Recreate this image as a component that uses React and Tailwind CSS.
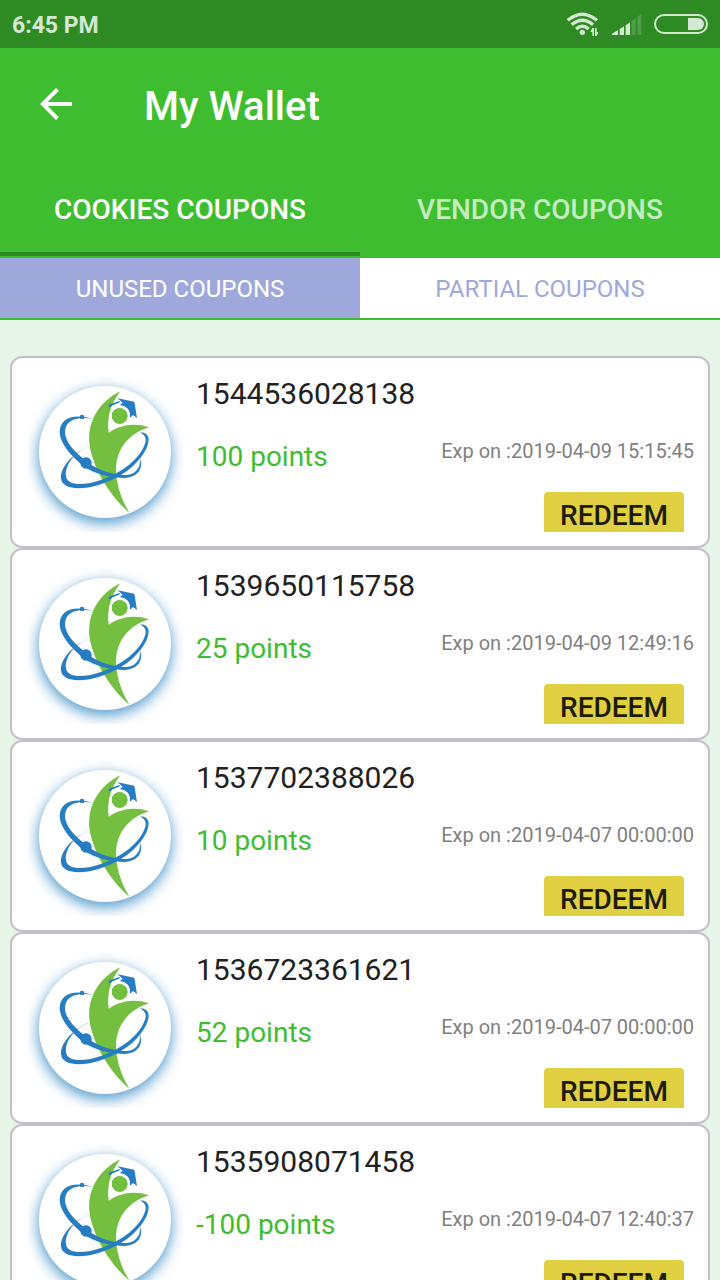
import React from 'react';

const coupons = [
  { id: '1544536028138', points: '100 points', expires: '2019-04-09 15:15:45' },
  { id: '1539650115758', points: '25 points', expires: '2019-04-09 12:49:16' },
  { id: '1537702388026', points: '10 points', expires: '2019-04-07 00:00:00' },
  { id: '1536723361621', points: '52 points', expires: '2019-04-07 00:00:00' },
  { id: '1535908071458', points: '-100 points', expires: '2019-04-07 12:40:37' },
];

function StatusBar() {
  return (
    <div className="flex h-12 shrink-0 items-center justify-between bg-[#2e8b24] px-3 text-[#d5e8d3]">
      <span className="pt-1 text-[23px] font-bold">6:45 PM</span>
      <div className="flex items-center gap-3">
        <svg className="h-6 w-8" viewBox="0 0 96 72" fill="none" aria-hidden="true">
          <g stroke="currentColor" strokeWidth="10">
            <path d="M5 25 Q49 -12 93 25" />
            <path d="M17 38 Q49 11 81 38" />
            <path d="M30 51 Q49 35 68 51" />
          </g>
          <circle cx="49" cy="61" r="8" fill="currentColor" />
          <path d="M79 48h5v24h-5V60h-6zM87 48h5v12h6l-6 12h-5z" fill="currentColor" />
        </svg>
        <svg className="h-6 w-8" viewBox="0 0 96 72" fill="currentColor" aria-hidden="true">
          <path d="M6 69 V65 L24 54 V69 Z M29 51 L42 43 V69 H29 Z M47 40 L60 31 V69 H47 Z" />
          <path d="M65 27 L77 18 V69 H65 Z M82 15 L94 6 V69 H82 Z" opacity=".2" />
        </svg>
        <svg className="h-5 w-[54px]" viewBox="0 0 54 20" aria-hidden="true">
          <rect x="1" y="1" width="52" height="18" rx="9" fill="none" stroke="currentColor" strokeWidth="2" />
          <path d="M34 4H44A6 6 0 0 1 44 16H34Z" fill="currentColor" />
        </svg>
      </div>
    </div>
  );
}

function Logo() {
  return (
    <svg className="mt-[18px] ml-4 size-[156px] shrink-0" viewBox="24 18 468 468" role="img" aria-label="Coupon">
      <defs>
        <filter id="glow" x="-40%" y="-40%" width="180%" height="180%">
          <feGaussianBlur stdDeviation="20" />
        </filter>
      </defs>
      <circle cx="254" cy="260" r="201" fill="#5c9fd0" filter="url(#glow)" />
      <circle cx="255" cy="246" r="198" fill="#fff" />
      <path
        d="M301 64 C222 103 191 181 216 257 C232 315 278 386 328 428 C300 383 284 326 289 282 C297 223 338 187 387 172 C346 158 302 164 266 188 C260 143 272 101 301 64 Z"
        fill="#74bf3f"
      />
      <g fill="#267dc2">
        <path d="M216 146 C160 130 119 145 119 187 C120 222 155 260 190 288 C225 314 275 324 315 324 C350 321 371 300 361 264 C363 293 345 315 318 315 C285 315 235 302 205 278 C165 247 134 215 135 185 C136 153 165 139 216 146 Z" />
        <path d="M210 229 C165 245 120 290 123 325 C125 350 155 358 200 353 C250 345 290 325 320 304 C365 270 386 232 386 208 C384 192 373 186 361 188 C374 194 380 204 376 218 C368 245 340 280 300 303 C260 328 215 342 180 342 C155 342 140 335 138 318 C134 288 160 248 210 229 Z" />
        <circle cx="186" cy="141" r="7" />
        <circle cx="198" cy="279" r="17" />
      </g>
      <circle cx="299" cy="138" r="31" fill="#fff" />
      <circle cx="299" cy="138" r="24" fill="#74bf3f" />
      <g fill="#267dc2">
        <path d="M293 85 L343 95 L351 144 L339 135 L330 143 C332 120 321 108 299 105 L308 99 Z" />
        <path d="M298 93 L270 103 L264 108 L270 112 L275 107 L300 97 Z" />
      </g>
    </svg>
  );
}

function CouponCard({ coupon }) {
  return (
    <li className="flex h-48 shrink-0 rounded-xl border-2 border-[#c2c1c8] bg-white">
      <Logo />
      <div className="ml-3 flex min-w-0 flex-1 flex-col pt-4">
        <h2 className="text-[30px] leading-10 text-[#212121]">{coupon.id}</h2>
        <div className="mt-[23px] flex items-start justify-between pr-3.5">
          <p className="text-[28px] leading-10 text-[#3fbc31]">{coupon.points}</p>
          <p className="text-xl leading-7 text-[#808080]">Exp on :{coupon.expires}</p>
        </div>
        <div className="mt-[15px] mr-6 h-10 self-end overflow-hidden rounded-t">
          <button type="button" className="h-12 w-[140px] bg-[#dfcf41] text-[28px] font-medium text-[#1d1b08]">
            REDEEM
          </button>
        </div>
      </div>
    </li>
  );
}

export default function App() {
  return (
    <div className="flex h-screen flex-col overflow-hidden bg-[#e7f5e8] font-['Roboto',sans-serif]">
      <StatusBar />
      <header className="shrink-0 bg-[#3fbd31] text-white">
        <div className="flex h-28 items-center pl-8">
          <button type="button" aria-label="Back" className="size-12">
            <svg viewBox="0 0 24 24" fill="currentColor" aria-hidden="true">
              <path d="M20 11H7.83l5.59-5.59L12 4l-8 8 8 8 1.41-1.41L7.83 13H20v-2z" />
            </svg>
          </button>
          <h1 className="ml-16 pt-1.5 text-[40px] font-medium">My Wallet</h1>
        </div>
        <nav className="grid h-24 grid-cols-2 text-[28px] font-medium">
          <button type="button" className="border-b-4 border-[#2e8b24] pt-2">COOKIES COUPONS</button>
          <button type="button" className="border-b-4 border-transparent pt-2 text-[#c5ebc1]">VENDOR COUPONS</button>
        </nav>
      </header>
      <nav className="grid h-16 shrink-0 grid-cols-2 border-y-2 border-[#3fbd31] bg-white text-2xl">
        <button type="button" className="bg-[#9fa8da] pt-0.5 text-white">UNUSED COUPONS</button>
        <button type="button" className="pt-0.5 text-[#9fa8da]">PARTIAL COUPONS</button>
      </nav>
      <main className="min-h-0 flex-1 overflow-hidden px-2.5 pt-9">
        <ul className="flex flex-col">
          {coupons.map((coupon) => (
            <CouponCard key={coupon.id} coupon={coupon} />
          ))}
        </ul>
      </main>
    </div>
  );
}
